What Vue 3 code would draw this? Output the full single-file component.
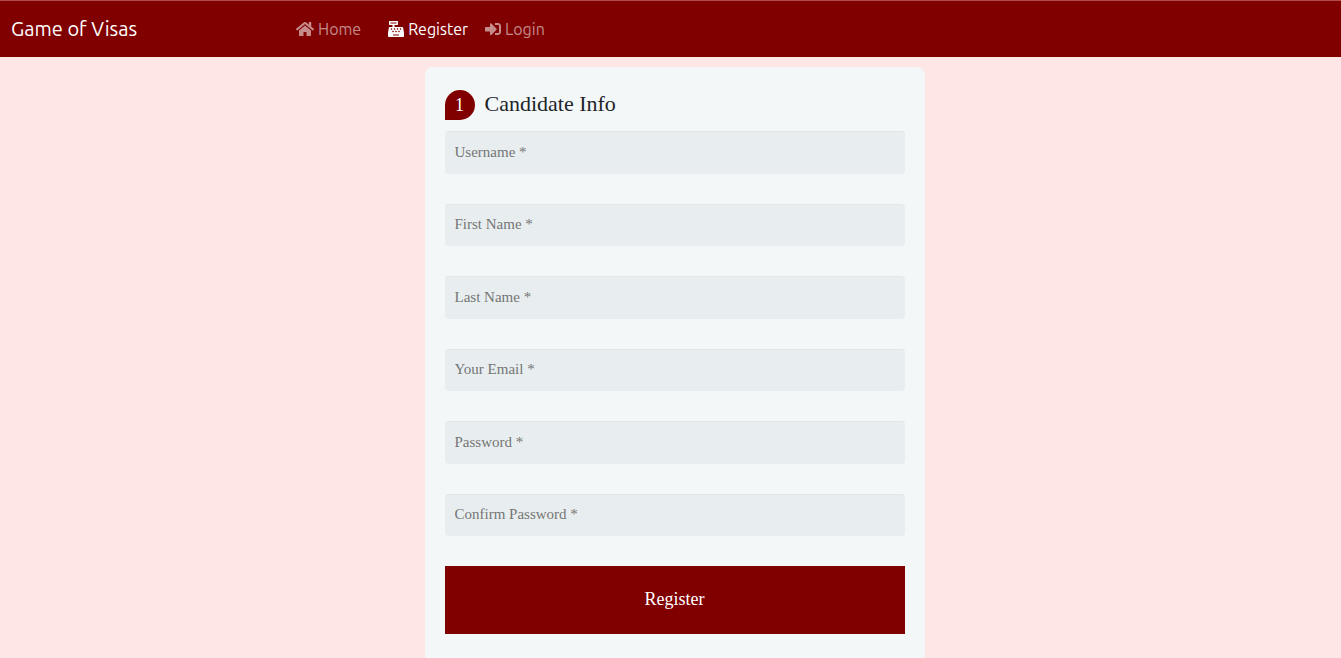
<script setup>
import { reactive } from 'vue'

const links = [
  {
    label: 'Home',
    name: 'home',
    box: '0 0 576 512',
    path: 'M280.37 148.26L96 300.11V464a16 16 0 0 0 16 16l112.06-.29a16 16 0 0 0 15.92-16V368a16 16 0 0 1 16-16h64a16 16 0 0 1 16 16v95.64a16 16 0 0 0 16 16.05L464 480a16 16 0 0 0 16-16V300L295.67 148.26a12.19 12.19 0 0 0-15.3 0zM571.6 251.47L488 182.56V44.05a12 12 0 0 0-12-12h-56a12 12 0 0 0-12 12v72.61L318.47 43a48 48 0 0 0-61 0L4.34 251.47a12 12 0 0 0-1.6 16.9l25.5 31A12 12 0 0 0 45.15 301l235.22-193.74a12.19 12.19 0 0 1 15.3 0L530.9 301a12 12 0 0 0 16.9-1.6l25.5-31a12 12 0 0 0-1.7-16.93z'
  },
  {
    label: 'Register',
    name: 'register',
    active: true,
    box: '0 0 512 512',
    path: 'M511.1 378.8l-26.7-160c-2.6-15.4-15.9-26.7-31.6-26.7H208v-64h96c8.8 0 16-7.2 16-16V16c0-8.8-7.2-16-16-16H48c-8.8 0-16 7.2-16 16v96c0 8.8 7.2 16 16 16h96v64H59.1c-15.6 0-29 11.3-31.6 26.7L.8 378.7c-.6 3.5-.9 7-.9 10.5V480c0 17.7 14.3 32 32 32h448c17.7 0 32-14.3 32-32v-90.7c.1-3.5-.2-7-.8-10.5zM280 248c0-8.8 7.2-16 16-16h16c8.8 0 16 7.2 16 16v16c0 8.8-7.2 16-16 16h-16c-8.8 0-16-7.2-16-16v-16zm-32 64h16c8.8 0 16 7.2 16 16v16c0 8.8-7.2 16-16 16h-16c-8.8 0-16-7.2-16-16v-16c0-8.8 7.2-16 16-16zm-32-80c8.8 0 16 7.2 16 16v16c0 8.8-7.2 16-16 16h-16c-8.8 0-16-7.2-16-16v-16c0-8.8 7.2-16 16-16h16zM80 80V48h192v32H80zm40 200h-16c-8.8 0-16-7.2-16-16v-16c0-8.8 7.2-16 16-16h16c8.8 0 16 7.2 16 16v16c0 8.8-7.2 16-16 16zm16 64v-16c0-8.8 7.2-16 16-16h16c8.8 0 16 7.2 16 16v16c0 8.8-7.2 16-16 16h-16c-8.8 0-16-7.2-16-16zm216 112c0 4.4-3.6 8-8 8H168c-4.4 0-8-3.6-8-8v-16c0-4.4 3.6-8 8-8h176c4.4 0 8 3.6 8 8v16zm24-112c0 8.8-7.2 16-16 16h-16c-8.8 0-16-7.2-16-16v-16c0-8.8 7.2-16 16-16h16c8.8 0 16 7.2 16 16v16zm48-80c0 8.8-7.2 16-16 16h-16c-8.8 0-16-7.2-16-16v-16c0-8.8 7.2-16 16-16h16c8.8 0 16 7.2 16 16v16z'
  },
  {
    label: 'Login',
    name: 'login',
    box: '0 0 512 512',
    path: 'M416 448h-84c-6.6 0-12-5.4-12-12v-40c0-6.6 5.4-12 12-12h84c17.7 0 32-14.3 32-32V160c0-17.7-14.3-32-32-32h-84c-6.6 0-12-5.4-12-12V76c0-6.6 5.4-12 12-12h84c53 0 96 43 96 96v192c0 53-43 96-96 96zm-47-201L201 79c-15-15-41-4.5-41 17v96H24c-13.3 0-24 10.7-24 24v96c0 13.3 10.7 24 24 24h136v96c0 21.5 26 32 41 17l168-168c9.3-9.4 9.3-24.6 0-34z'
  }
]

const fields = [
  { id: 'username', label: 'Username *', type: 'text' },
  { id: 'first-name', label: 'First Name *', type: 'text' },
  { id: 'last-name', label: 'Last Name *', type: 'text' },
  { id: 'email', label: 'Your Email *', type: 'email' },
  { id: 'password', label: 'Password *', type: 'password' },
  { id: 'confirm-password', label: 'Confirm Password *', type: 'password' }
]

const form = reactive(Object.fromEntries(fields.map((f) => [f.id, ''])))
</script>

<template>
  <header class="navbar">
    <a class="brand" href="#">Game of Visas</a>
    <nav class="links">
      <a
        v-for="link in links"
        :key="link.name"
        :href="'#' + link.name"
        :class="['link', link.name, { active: link.active }]"
      >
        <svg class="icon" :viewBox="link.box" aria-hidden="true"><path :d="link.path" /></svg>
        <span>{{ link.label }}</span>
      </a>
    </nav>
  </header>

  <main class="page">
    <form class="card" @submit.prevent>
      <h1 class="legend"><span class="number">1</span>Candidate Info</h1>
      <div class="fields">
        <input
          v-for="field in fields"
          :id="field.id"
          :key="field.id"
          v-model="form[field.id]"
          class="field"
          :type="field.type"
          :placeholder="field.label"
          :aria-label="field.label"
        />
      </div>
      <button class="submit" type="submit">Register</button>
    </form>
  </main>
</template>

<style>
body {
  margin: 0;
  background: #ffe6e6;
}
</style>

<style scoped>
.navbar {
  display: flex;
  align-items: center;
  box-sizing: border-box;
  min-height: 57px;
  padding: 0 11px;
  border-top: 1px solid #b34d4d;
  background: #800000;
  font-family: Ubuntu, "Noto Sans", sans-serif;
}

.brand {
  flex: 0 0 285px;
  color: #fff;
  font-size: 20px;
  line-height: 30px;
  text-decoration: none;
}

.links {
  display: flex;
  gap: 17px;
}

.link {
  display: flex;
  align-items: center;
  gap: 4px;
  color: rgba(255, 255, 255, 0.55);
  font-size: 16px;
  line-height: 24px;
  text-decoration: none;
}

.link.active {
  color: #fff;
}

.link.home {
  margin-right: 10px;
}

.icon {
  width: 16px;
  height: 16px;
  fill: currentColor;
}

.home .icon {
  width: 18px;
}

.page {
  padding: 10px 0 0 8px;
}

.card {
  box-sizing: border-box;
  max-width: 500px;
  margin: 0 auto;
  padding: 23px 20px 30px;
  border-radius: 8px;
  background: #f4f7f8;
  font-family: "Liberation Serif", serif;
}

.legend {
  display: flex;
  align-items: flex-start;
  gap: 10px;
  margin: 0 0 11px;
  color: #212529;
  font-size: 22px;
  font-weight: 400;
  line-height: 28px;
}

.number {
  width: 30px;
  border-radius: 15px 15px 15px 0;
  background: #800000;
  color: #fff;
  font-size: 18px;
  line-height: 30px;
  text-align: center;
}

.fields {
  display: grid;
  grid-auto-rows: 1fr;
  gap: 30px;
  min-height: 405px;
  margin-bottom: 30px;
}

.field {
  box-sizing: border-box;
  width: 100%;
  padding: 10px;
  border: 0;
  border-radius: 4px;
  outline: 0;
  background: #e8eeef;
  box-shadow: 0 1px 0 rgba(0, 0, 0, 0.03) inset;
  color: #8a97a0;
  font-family: inherit;
  font-size: 15px;
}

.field::placeholder {
  color: #757575;
}

.submit {
  width: 100%;
  padding: 18px 39px 20px;
  border: 0;
  background: #800000;
  color: #fff;
  font-family: inherit;
  font-size: 18px;
  line-height: 30px;
  text-align: center;
}
</style>
